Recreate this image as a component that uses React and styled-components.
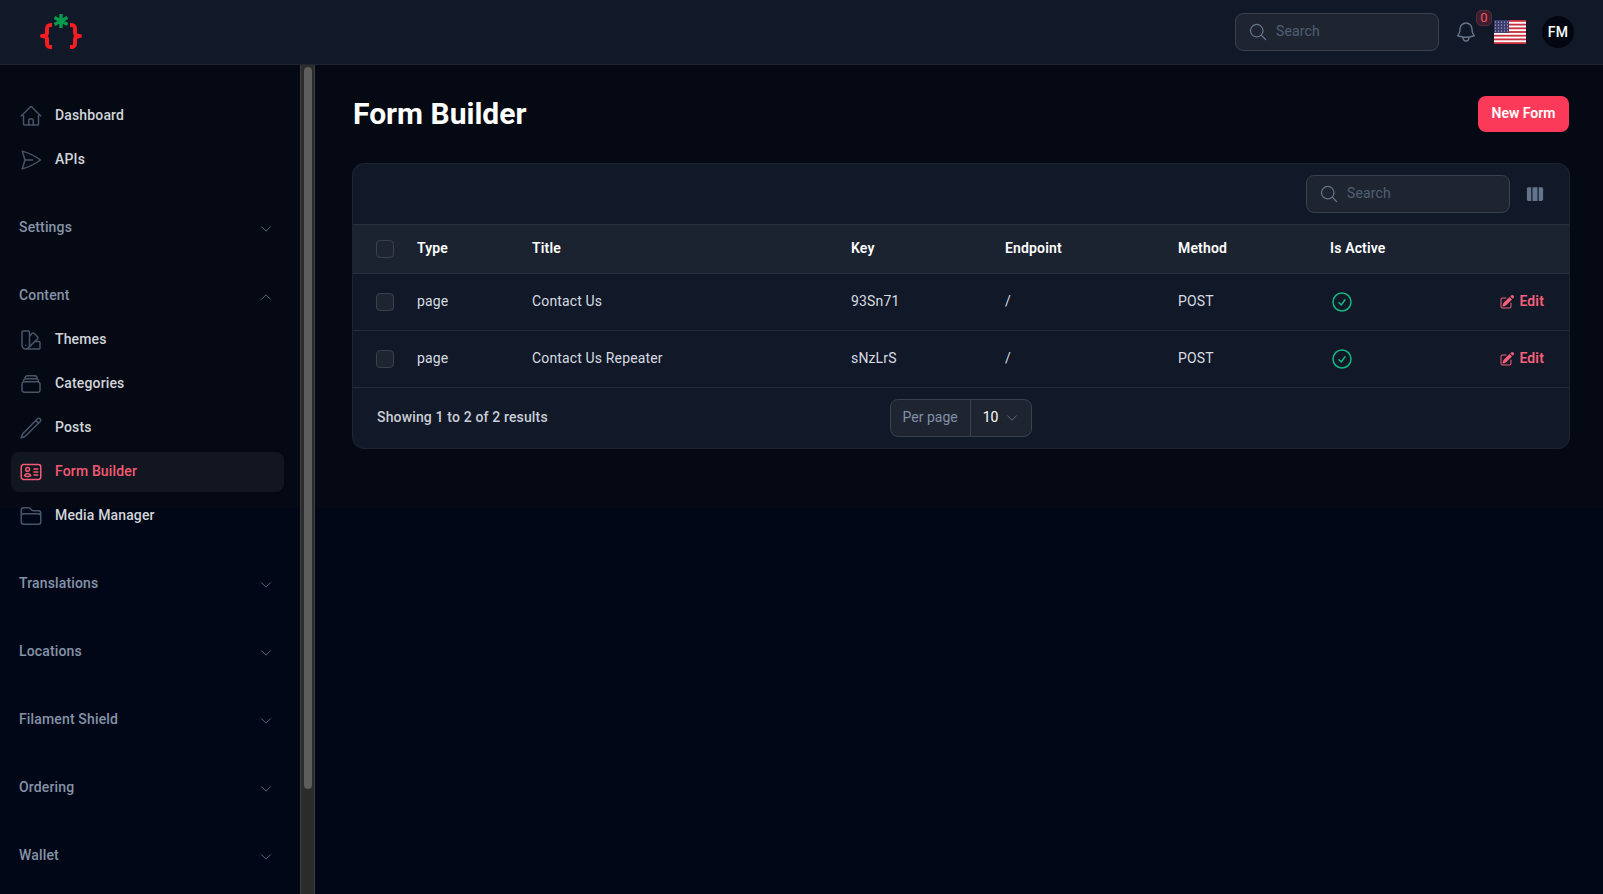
import React from "react";
import styled, { createGlobalStyle } from "styled-components";
import {
  HiOutlineHome,
  HiOutlinePaperAirplane,
  HiOutlineSwatch,
  HiOutlineRectangleStack,
  HiOutlinePencil,
  HiOutlineIdentification,
  HiOutlineFolder,
  HiOutlineMagnifyingGlass,
  HiOutlineBell,
  HiOutlineCheckCircle,
  HiOutlineChevronDown,
  HiOutlineChevronUp,
  HiViewColumns,
  HiPencilSquare,
} from "react-icons/hi2";

const GlobalStyle = createGlobalStyle`
  html, body {
    margin: 0;
    height: 100%;
    background: linear-gradient(#050913 508px, #010716 508px);
  }
  body {
    font-family: "Roboto", "Liberation Sans", sans-serif;
    font-size: 14px;
    letter-spacing: 0.15px;
    color: #e5e7eb;
    overflow: hidden;
  }
  * { box-sizing: border-box; }
`;

const Page = styled.div`
  width: 1603px;
  height: 894px;
  display: flex;
  flex-direction: column;
  overflow: hidden;
`;

const TopBar = styled.header`
  height: 65px;
  flex: none;
  display: flex;
  align-items: center;
  justify-content: space-between;
  background: #111827;
  border-bottom: 1px solid #1f2632;
  padding: 0 29px 1px 36px;
`;

const TopRight = styled.div`
  display: flex;
  align-items: center;
`;

const SearchBox = styled.div`
  width: 204px;
  height: 38px;
  display: flex;
  align-items: center;
  gap: 8px;
  padding: 0 12px;
  background: #1f2530;
  border: 1px solid #3a414d;
  border-radius: 8px;
  color: #4f5f75;
  font-size: 14px;
  svg { color: #64748b; flex: none; }
`;

const SearchText = styled.span`
  margin-bottom: 2px;
`;

const BellWrap = styled.div`
  position: relative;
  width: 24px;
  height: 24px;
  margin-left: 15px;
  margin-right: 16px;
  color: #64748b;
`;

const Badge = styled.span`
  position: absolute;
  top: -10px;
  left: 22px;
  width: 16px;
  height: 16px;
  display: flex;
  align-items: center;
  justify-content: center;
  border-radius: 5px;
  font-size: 13px;
  color: #fb4f6b;
  background: #3c1f2d;
  border: 1px solid #5b2a3a;
`;

const Flag = styled.svg`
  display: block;
  width: 32px;
  height: 24px;
  margin-right: 16px;
`;

const Avatar = styled.div`
  width: 32px;
  height: 32px;
  border-radius: 50%;
  background: #030712;
  color: #fff;
  font-size: 14px;
  font-weight: 500;
  display: flex;
  align-items: center;
  justify-content: center;
`;

const Body = styled.div`
  flex: 1;
  display: flex;
  min-height: 0;
`;

const SideBar = styled.aside`
  width: 300px;
  flex: none;
  padding: 31px 16px 0 11px;
  display: flex;
  flex-direction: column;
  overflow: hidden;
`;

const NavGroup = styled.div`
  display: flex;
  flex-direction: column;
  flex: none;
  gap: 4px;
  margin-bottom: 28px;
`;

const NavItem = styled.a`
  height: 40px;
  flex: none;
  display: flex;
  align-items: center;
  gap: 12px;
  padding: 0 8px 2px;
  border-radius: 8px;
  font-size: 14px;
  font-weight: 500;
  color: ${(p) => (p.$active ? "#f55a73" : "#d1d5db")};
  background: ${(p) => (p.$active ? "#121620" : "transparent")};
  svg { flex: none; margin-top: 2px; color: ${(p) => (p.$active ? "#f55a73" : "#475569")}; }
`;

const GroupHead = styled.div`
  height: 40px;
  flex: none;
  display: flex;
  align-items: center;
  justify-content: space-between;
  padding: 0 11px 2px 8px;
  font-size: 14px;
  font-weight: 500;
  color: #8593a8;
  svg { color: #64748b; margin-top: 4px; }
`;

const ScrollTrack = styled.div`
  width: 15px;
  flex: none;
  background: #2b2b2b;
  border-left: 1px solid #3e3e3e;
  border-right: 1px solid #3e3e3e;
  padding: 2px 2px 0 3px;
`;

const ScrollThumb = styled.div`
  height: 722px;
  background: #5d5d5d;
  border-radius: 4px;
`;

const Main = styled.main`
  flex: 1;
  min-width: 0;
  padding: 31px 33px 0 37px;
`;

const TitleRow = styled.div`
  height: 36px;
  display: flex;
  align-items: center;
  justify-content: space-between;
  margin-bottom: 31px;
`;

const Title = styled.h1`
  margin: -2px 0 0 1px;
  font-size: 30px;
  font-weight: 700;
  letter-spacing: 0;
  color: #fff;
`;

const PrimaryButton = styled.button`
  width: 91px;
  height: 36px;
  margin-right: 1px;
  padding: 0 0 2px;
  border: none;
  border-radius: 8px;
  background: #fb3a5a;
  color: #fff;
  font-family: inherit;
  font-size: 14px;
  font-weight: 600;
`;

const Card = styled.section`
  background: #111827;
  border: 1px solid #1e2531;
  border-radius: 12px;
  overflow: hidden;
`;

const CardTools = styled.div`
  height: 60px;
  display: flex;
  align-items: center;
  justify-content: flex-end;
  gap: 15px;
  padding: 0 24px;
  color: #64748b;
`;

const Table = styled.table`
  width: 100%;
  border-collapse: collapse;
  table-layout: fixed;
  th, td { padding: 0 0 2px; text-align: left; font-size: 14px; }
  th { height: 49px; font-weight: 600; color: #fff; background: #1c2330; border-top: 1px solid #283040; border-bottom: 1px solid #283040; }
  td { height: 57px; color: #d8dce2; border-bottom: 1px solid #252c39; }
`;

const CheckCell = styled.div`
  padding: 2px 0 0 23px;
  display: flex;
`;

const CheckBox = styled.span`
  width: 18px;
  height: 18px;
  border-radius: 4px;
  background: #1f2530;
  border: 1px solid #3a414d;
`;

const ActiveIcon = styled(HiOutlineCheckCircle)`
  display: block;
  margin-top: 2px;
  color: #10b981;
`;

const EditLink = styled.a`
  display: flex;
  align-items: center;
  justify-content: flex-end;
  gap: 4px;
  padding-right: 25px;
  color: #f5607a;
  font-weight: 600;
  svg { margin-top: 2px; }
`;

const CardFooter = styled.div`
  height: 60px;
  display: grid;
  grid-template-columns: 1fr auto 1fr;
  align-items: center;
  padding: 0 24px;
  color: #c9ced6;
  font-weight: 500;
`;

const FooterText = styled.span`
  margin-bottom: 2px;
`;

const PerPage = styled.div`
  display: flex;
  height: 38px;
  border: 1px solid #3a414d;
  border-radius: 8px;
  background: #1f2530;
  letter-spacing: 0;
`;

const PerPageLabel = styled.span`
  display: flex;
  align-items: center;
  padding: 0 12px 2px 12px;
  color: #7f90a8;
  font-weight: 400;
  border-right: 1px solid #3a414d;
`;

const PerPageValue = styled.span`
  display: flex;
  align-items: center;
  gap: 7px;
  padding: 0 12px 2px 12px;
  color: #fff;
  font-weight: 400;
  svg { color: #64748b; margin-top: 2px; }
`;

const columns = [64, 115, 319, 154, 173, 152, 130, null];
const rows = [
  { type: "page", title: "Contact Us", key: "93Sn71" },
  { type: "page", title: "Contact Us Repeater", key: "sNzLrS" },
];

const Logo = () => (
  <svg width="50" height="40" viewBox="0 0 50 40" style={{ display: "block", marginTop: -2 }}>
    <g fill="none" stroke="#f51d22" strokeWidth="4" strokeLinejoin="round">
      <path d="M16 14h-1c-3 0-4 1-4 4v3.500c0 2-1 3.500-5 3.500 4 0 5 1.500 5 3.500v3.500c0 3 1 4 4 4h1" />
      <path d="M34 14h1c3 0 4 1 4 4v3.500c0 2 1 3.500 5 3.500-4 0-5 1.500-5 3.500v3.500c0 3-1 4-4 4h-1" />
    </g>
    <g stroke="#069a4c" strokeWidth="3.400">
      <path d="M25 3v14M18.500 6.500l13 7M31.500 6.500l-13 7" />
    </g>
  </svg>
);

const UsFlag = () => (
  <Flag viewBox="0 0 32 24">
    <rect width="32" height="24" fill="#fff" />
    {[0, 2, 4, 6, 8, 10, 12].map((i) => (
      <rect key={i} y={i * 1.846} width="32" height="1.846" fill="#c8313e" />
    ))}
    <rect width="15" height="12.900" fill="#3c3b6e" />
    {[2, 5, 8, 11].map((y) =>
      [2, 5, 8, 11, 14].map((x) => <circle key={x + "-" + y} cx={x - 0.5} cy={y} r="0.600" fill="#d5d5e5" />)
    )}
  </Flag>
);

const Nav = ({ icon: Icon, label, active }) => (
  <NavItem $active={active}>
    <Icon size={24} />
    {label}
  </NavItem>
);

const Group = ({ label, open, children }) => (
  <NavGroup>
    <GroupHead>
      {label}
      {open ? <HiOutlineChevronUp size={14} /> : <HiOutlineChevronDown size={14} />}
    </GroupHead>
    {children}
  </NavGroup>
);

const Search = () => (
  <SearchBox>
    <HiOutlineMagnifyingGlass size={20} />
    <SearchText>Search</SearchText>
  </SearchBox>
);

const App = () => (
  <Page>
    <GlobalStyle />
    <TopBar>
      <Logo />
      <TopRight>
        <Search />
        <BellWrap>
          <HiOutlineBell size={24} />
          <Badge>0</Badge>
        </BellWrap>
        <UsFlag />
        <Avatar>FM</Avatar>
      </TopRight>
    </TopBar>
    <Body>
      <SideBar>
        <NavGroup>
          <Nav icon={HiOutlineHome} label="Dashboard" />
          <Nav icon={HiOutlinePaperAirplane} label="APIs" />
        </NavGroup>
        <Group label="Settings" />
        <Group label="Content" open>
          <Nav icon={HiOutlineSwatch} label="Themes" />
          <Nav icon={HiOutlineRectangleStack} label="Categories" />
          <Nav icon={HiOutlinePencil} label="Posts" />
          <Nav icon={HiOutlineIdentification} label="Form Builder" active />
          <Nav icon={HiOutlineFolder} label="Media Manager" />
        </Group>
        <Group label="Translations" />
        <Group label="Locations" />
        <Group label="Filament Shield" />
        <Group label="Ordering" />
        <Group label="Wallet" />
      </SideBar>
      <ScrollTrack>
        <ScrollThumb />
      </ScrollTrack>
      <Main>
        <TitleRow>
          <Title>Form Builder</Title>
          <PrimaryButton>New Form</PrimaryButton>
        </TitleRow>
        <Card>
          <CardTools>
            <Search />
            <HiViewColumns size={20} />
          </CardTools>
          <Table>
            <colgroup>
              {columns.map((w, i) => (
                <col key={i} style={w ? { width: w } : undefined} />
              ))}
            </colgroup>
            <thead>
              <tr>
                <th><CheckCell><CheckBox /></CheckCell></th>
                <th>Type</th>
                <th>Title</th>
                <th>Key</th>
                <th>Endpoint</th>
                <th>Method</th>
                <th>Is Active</th>
                <th />
              </tr>
            </thead>
            <tbody>
              {rows.map((r) => (
                <tr key={r.key}>
                  <td><CheckCell><CheckBox /></CheckCell></td>
                  <td>{r.type}</td>
                  <td>{r.title}</td>
                  <td>{r.key}</td>
                  <td>/</td>
                  <td>POST</td>
                  <td><ActiveIcon size={24} /></td>
                  <td>
                    <EditLink>
                      <HiPencilSquare size={16} />
                      Edit
                    </EditLink>
                  </td>
                </tr>
              ))}
            </tbody>
          </Table>
          <CardFooter>
            <FooterText>Showing 1 to 2 of 2 results</FooterText>
            <PerPage>
              <PerPageLabel>Per page</PerPageLabel>
              <PerPageValue>
                10
                <HiOutlineChevronDown size={14} />
              </PerPageValue>
            </PerPage>
          </CardFooter>
        </Card>
      </Main>
    </Body>
  </Page>
);

export default App;
